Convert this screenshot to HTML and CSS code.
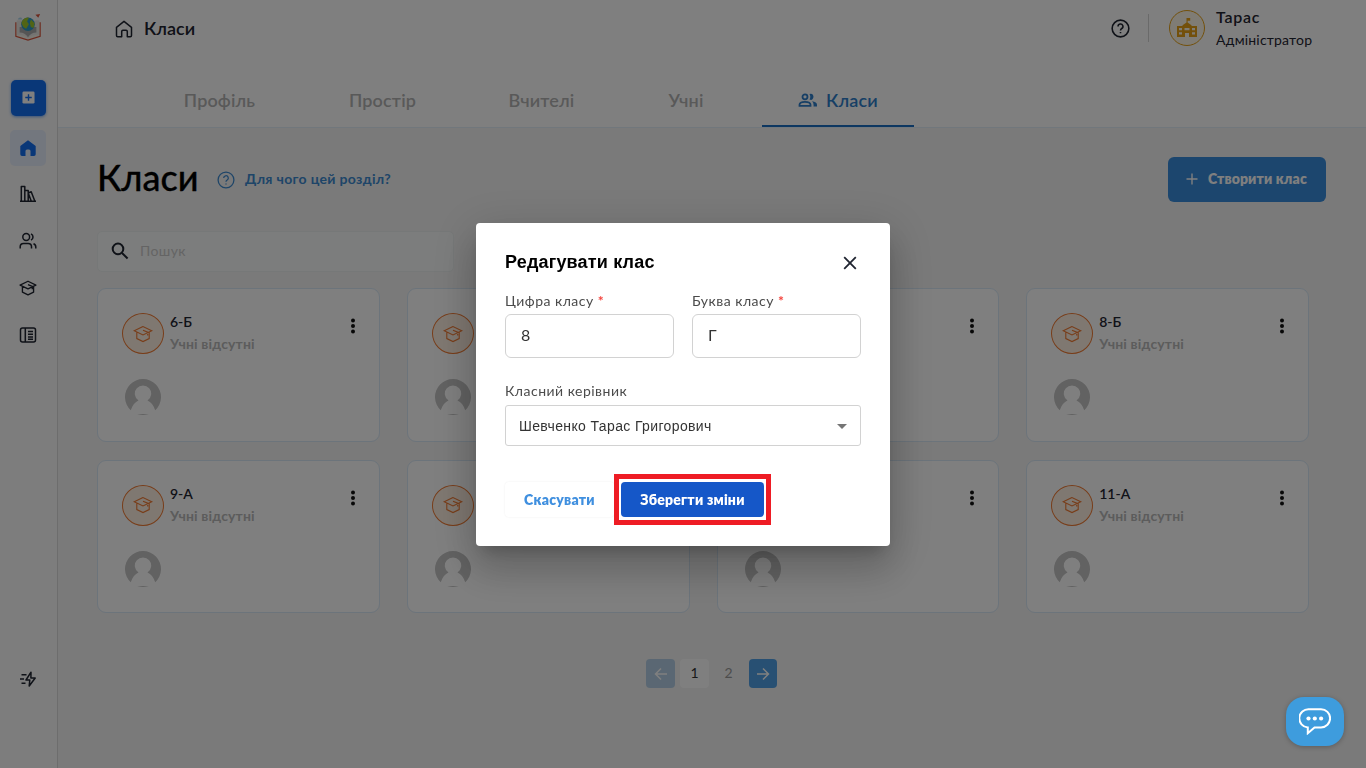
FILE: index.html
```html
<!DOCTYPE html>
<html lang="uk">

<head>
    <meta charset="UTF-8">
    <meta name="viewport" content="width=device-width, initial-scale=1.0">
    <title>Класи</title>
    <link rel="stylesheet" href="styles.css">
</head>

<body>
    <svg class="sprite">
        <symbol id="cap" viewBox="0 0 20 20">
            <path d="M10 2.5 1.2 6.7 10 11l8.8-4.3zM3.8 8v6.6L10 17.6l6.2-3V8M10 6.2l4.7 2v3.3" />
        </symbol>
        <symbol id="dots" viewBox="0 0 6 16">
            <circle cx="3" cy="2.4" r="2" />
            <circle cx="3" cy="8" r="2" />
            <circle cx="3" cy="13.6" r="2" />
        </symbol>
        <symbol id="user" viewBox="0 0 36 36">
            <path d="M5.8 31.3A18 18 0 1 1 30.2 31.3C28.5 26.5 26 23 22.5 21.6A8.2 8.2 0 1 0 13.5 21.6C10 23 7.5 26.5 5.8 31.3z" />
            <path d="M12 35.3q6-.8 12 0-6 1.2-12 0z" />
        </symbol>
        <symbol id="help" viewBox="0 0 18 18">
            <circle cx="9" cy="9" r="7.9" />
            <path d="M6.700 7.100a2.300 2.300 0 1 1 3.500 1.900c-.8.500-1.200.9-1.200 1.800M9 12.400v1.200" />
        </symbol>
    </svg>

    <div class="app">
        <aside class="sidebar">
            <svg class="logo" viewBox="0 0 30 28">
                <path d="M2 9v15l13 4 13-4V9" fill="#f4f0e6" stroke="#d9543a" stroke-width="1.3" />
                <path d="M3 7q7-1 12 3 5-4 12-3v15q-8 0-12 4-4-4-12-4z" fill="#e9e7e2" />
                <path d="M6 20q6 0 9 5 3-5 9-5v-6H6z" fill="#aaa" />
                <path d="M4 6q1-3 4-2l1 2z" fill="#a9d4ea" />
                <circle cx="15" cy="11" r="7.3" fill="#2f9bc9" />
                <path d="M9 7q3-4 7-3l-2 4 2 3-3 5q-4-2-5-6zM18 6l4 4-1 5-3-1-1-4z" fill="#a3c92b" />
                <path d="m23 1 5-1-2 4z" fill="#d9543a" />
            </svg>
            <nav class="side-nav">
                <a class="side-link add">
                    <svg width="13" height="13" viewBox="0 0 14 14">
                        <rect x=".5" y=".5" width="13" height="13" rx="1.5" fill="#fff" />
                        <path d="M7 3.500v7M3.500 7h7" stroke="#136ef0" stroke-width="1.5" />
                    </svg>
                </a>
                <a class="side-link active">
                    <svg width="18" height="18" viewBox="0 0 18 18">
                        <path d="M9 1.200 1.300 7v8.200Q1.300 17 3 17h3.500v-5q0-1.500 1.500-1.500h2q1.500 0 1.500 1.500v5H15q1.700 0 1.700-1.800V7z" fill="#136ef0" />
                    </svg>
                </a>
                <a class="side-link">
                    <svg class="line" width="18" height="18" viewBox="0 0 18 18">
                        <path d="M1 16.300h16M2.300 16V1.500h3.500V16M5.800 5.500h3.400V16M9.200 8l3-1.200L15.800 16M9.200 8l3 8" />
                    </svg>
                </a>
                <a class="side-link">
                    <svg class="line" width="18" height="18" viewBox="0 0 18 18">
                        <circle cx="7.2" cy="5" r="3.4" />
                        <path d="M1.200 16.500v-1.700Q1.200 11.500 4.500 11.500h4.700q3.300 0 3.300 3.300v1.700M12 1.800q2 1 2 3.200t-2 3.200M14.500 11.700q2.300.8 2.300 3.200v1.600" />
                    </svg>
                </a>
                <a class="side-link">
                    <svg class="line" width="18" height="18"><use href="#cap" /></svg>
                </a>
                <a class="side-link">
                    <svg class="line" width="18" height="18" viewBox="0 0 18 18">
                        <rect x="1.5" y="2" width="15" height="14" rx="2" />
                        <path d="M6.300 2v14M9 5.500h5M9 8.200h5M9 10.900h5M9 13.300h5" />
                    </svg>
                </a>
            </nav>
            <svg class="line bolt" width="18" height="18" viewBox="0 0 18 18">
                <path d="M2.500 4.700h5M1 9h4M2.500 13.300h4M12 2.200 7 10h3.800l-.6 6L16.200 8h-4.300z" />
            </svg>
        </aside>

        <div class="main">
            <header class="header">
                <div class="topbar">
                    <div class="crumb">
                        <svg class="line" width="18" height="18" viewBox="0 0 18 18">
                            <path d="M1.500 7.300 9 1.300l7.500 6v8.200q0 1.200-1.200 1.200h-3v-5.200q0-1.200-1.200-1.200H7.900q-1.200 0-1.200 1.200v5.200h-4q-1.200 0-1.200-1.200z" />
                        </svg>
                        <span class="crumb-text">Класи</span>
                    </div>
                    <div class="account">
                        <svg class="line help-top" width="19" height="19"><use href="#help" /></svg>
                        <div class="school">
                            <svg width="20" height="20" viewBox="0 0 20 20">
                                <path d="M9.500 0h3.700v2.800h-2.600V4.500l3.900 2.800V8H20V19h-8v-4H8v4H0V8h5.500V7.300L9.500 4.500z" fill="#e6a116" />
                                <path d="M2 10h3v2.200H2zm0 4.300h3v2.200H2zM7.500 10h5v2.200h-5zM15 10h3v2.200h-3zm0 4.300h3v2.200h-3z" fill="#fff8ea" />
                            </svg>
                        </div>
                        <div class="person">
                            <p class="person-name">Тарас</p>
                            <p class="person-role">Адміністратор</p>
                        </div>
                    </div>
                </div>
                <nav class="tabs">
                    <a class="tab">Профіль</a>
                    <a class="tab">Простір</a>
                    <a class="tab">Вчителі</a>
                    <a class="tab">Учні</a>
                    <a class="tab current">
                        <svg width="20" height="14" viewBox="0 0 20 14">
                            <circle cx="7" cy="3.8" r="2.5" />
                            <path d="M1.500 12.800v-1q0-3 5.500-3t5.500 3v1z" />
                            <path class="fill" d="M11.500 1q3.500-1.200 4 2.800-.5 4-4 2.800 1.600-2.800 0-5.600zM14 8.300q5 .7 5 3.500v1.800h-3.500q.5-3.800-1.500-5.300z" />
                        </svg>
                        Класи
                    </a>
                </nav>
            </header>

            <main class="content">
                <div class="heading">
                    <h1 class="title">Класи</h1>
                    <a class="hint">
                        <svg width="18" height="18"><use href="#help" /></svg>
                        <span>Для чого цей розділ?</span>
                    </a>
                    <button class="create">
                        <svg width="12" height="12" viewBox="0 0 12 12"><path d="M6 .5v11M.5 6h11" /></svg>
                        <span>Створити клас</span>
                    </button>
                </div>

                <div class="search">
                    <svg width="18" height="18" viewBox="0 0 18 18">
                        <circle cx="7" cy="6.9" r="5.3" />
                        <path d="m11 11 5.600 5.500" />
                    </svg>
                    <span>Пошук</span>
                </div>

                <div class="cards">
                    <div class="card">
                        <div class="card-top">
                            <div class="badge"><svg width="20" height="20"><use href="#cap" /></svg></div>
                            <div class="card-text">
                                <p class="card-name">6-Б</p>
                                <p class="card-note">Учні відсутні</p>
                            </div>
                            <svg class="more"><use href="#dots" /></svg>
                        </div>
                        <svg class="avatar"><use href="#user" /></svg>
                    </div>
                    <div class="card">
                        <div class="card-top">
                            <div class="badge"><svg width="20" height="20"><use href="#cap" /></svg></div>
                        </div>
                        <svg class="avatar"><use href="#user" /></svg>
                    </div>
                    <div class="card">
                        <div class="card-top">
                            <div class="badge"><svg width="20" height="20"><use href="#cap" /></svg></div>
                            <svg class="more"><use href="#dots" /></svg>
                        </div>
                        <svg class="avatar"><use href="#user" /></svg>
                    </div>
                    <div class="card">
                        <div class="card-top">
                            <div class="badge"><svg width="20" height="20"><use href="#cap" /></svg></div>
                            <div class="card-text">
                                <p class="card-name">8-Б</p>
                                <p class="card-note">Учні відсутні</p>
                            </div>
                            <svg class="more"><use href="#dots" /></svg>
                        </div>
                        <svg class="avatar"><use href="#user" /></svg>
                    </div>
                    <div class="card">
                        <div class="card-top">
                            <div class="badge"><svg width="20" height="20"><use href="#cap" /></svg></div>
                            <div class="card-text">
                                <p class="card-name">9-А</p>
                                <p class="card-note">Учні відсутні</p>
                            </div>
                            <svg class="more"><use href="#dots" /></svg>
                        </div>
                        <svg class="avatar"><use href="#user" /></svg>
                    </div>
                    <div class="card">
                        <div class="card-top">
                            <div class="badge"><svg width="20" height="20"><use href="#cap" /></svg></div>
                        </div>
                        <svg class="avatar"><use href="#user" /></svg>
                    </div>
                    <div class="card">
                        <div class="card-top">
                            <div class="badge"><svg width="20" height="20"><use href="#cap" /></svg></div>
                            <svg class="more"><use href="#dots" /></svg>
                        </div>
                        <svg class="avatar"><use href="#user" /></svg>
                    </div>
                    <div class="card">
                        <div class="card-top">
                            <div class="badge"><svg width="20" height="20"><use href="#cap" /></svg></div>
                            <div class="card-text">
                                <p class="card-name">11-А</p>
                                <p class="card-note">Учні відсутні</p>
                            </div>
                            <svg class="more"><use href="#dots" /></svg>
                        </div>
                        <svg class="avatar"><use href="#user" /></svg>
                    </div>
                </div>

                <div class="pager">
                    <a class="arrow disabled"><svg width="14" height="14" viewBox="0 0 14 14"><path d="M13 7H2M7 1.500 1.500 7 7 12.500" /></svg></a>
                    <a class="page on">1</a>
                    <a class="page">2</a>
                    <a class="arrow"><svg width="14" height="14" viewBox="0 0 14 14"><path d="M1 7h11M7 1.500 12.500 7 7 12.500" /></svg></a>
                </div>
            </main>
        </div>
    </div>

    <div class="overlay">
        <div class="modal">
            <div class="modal-head">
                <h2 class="modal-title">Редагувати клас</h2>
                <svg width="14" height="14" viewBox="0 0 14 14"><path d="m1.200 1.200 11.600 11.600M12.800 1.200 1.200 12.800" /></svg>
            </div>
            <div class="fields">
                <div class="field">
                    <label class="label">Цифра класу <b>*</b></label>
                    <div class="input">8</div>
                </div>
                <div class="field">
                    <label class="label">Буква класу <b>*</b></label>
                    <div class="input">Г</div>
                </div>
            </div>
            <label class="label">Класний керівник</label>
            <div class="select">
                <span>Шевченко Тарас Григорович</span>
                <i class="caret"></i>
            </div>
            <div class="buttons">
                <button class="btn cancel">Скасувати</button>
                <button class="btn save">Зберегти зміни</button>
            </div>
        </div>
    </div>

    <div class="chat">
        <svg width="32" height="27" viewBox="0 0 32 27">
            <path d="M10 1.200h12a9 9 0 0 1 0 18.200H15.500L8.800 25.200V19.400A9 9 0 0 1 10 1.200z" />
            <circle cx="9.5" cy="10.5" r="2.1" />
            <circle cx="15.8" cy="10.5" r="2.1" />
            <circle cx="22.1" cy="10.5" r="2.1" />
        </svg>
    </div>
</body>

</html>
```
FILE: styles.css
```css
*,
*::before,
*::after {
    margin: 0;
    padding: 0;
    box-sizing: border-box;
}

body {
    height: 768px;
    overflow: hidden;
    font-family: Lato, "Open Sans", sans-serif;
    font-size: 14px;
    line-height: 20px;
    color: #1f2430;
    background-color: #f4f4f4;
}

svg {
    display: block;
    flex: none;
}

button {
    border: 0;
    font: inherit;
}

.sprite {
    display: none;
}

.line {
    fill: none;
    stroke: #1f2430;
    stroke-width: 1.5;
    stroke-linejoin: round;
}

.app {
    display: flex;
    height: 768px;
}

/* sidebar */
.sidebar {
    display: flex;
    flex-direction: column;
    align-items: center;
    width: 58px;
    padding: 13px 1px 80px 0;
    border-right: 1px solid #dadada;
    background-color: #fafafa;
}

.logo {
    width: 28px;
    height: 28px;
}

.side-nav {
    display: flex;
    flex-direction: column;
    align-items: center;
    gap: 11px;
    margin-top: 39px;
}

.side-link {
    display: flex;
    align-items: center;
    justify-content: center;
    width: 36px;
    height: 36px;
    border-radius: 5px;
}

.side-link.add {
    width: 35px;
    margin: 0 0 3px 1px;
    padding-bottom: 1px;
    background-color: #136ef0;
    box-shadow: 0 1px 3px rgba(19, 110, 240, 0.6);
}

.side-link.active {
    margin-bottom: -1px;
    background-color: #e6eefc;
}

.bolt {
    margin-top: auto;
}

/* header */
.main {
    flex: 1;
}

.header {
    display: flex;
    flex-direction: column;
    justify-content: space-between;
    height: 128px;
    border-bottom: 1px solid #e3eef8;
    background-color: #fff;
}

.topbar {
    display: flex;
    justify-content: space-between;
    height: 57px;
    padding: 0 54px 0 57px;
}

.crumb {
    display: flex;
    align-items: center;
    gap: 11px;
    font-size: 18px;
    font-weight: 600;
}

.crumb-text {
    padding-bottom: 2px;
}

.account {
    display: flex;
    align-items: center;
    padding-bottom: 1px;
}

.help-top {
    margin-right: 19px;
}

.school {
    display: flex;
    align-items: center;
    justify-content: center;
    position: relative;
    width: 36px;
    height: 36px;
    margin-left: 20px;
    border: 1px solid #e6a116;
    border-radius: 50%;
    background-color: #fff8ea;
}

.school::before {
    content: "";
    position: absolute;
    left: -22px;
    width: 1px;
    height: 28px;
    background-color: #d5d5d5;
}

.person {
    width: 96px;
    margin-left: 11px;
}

.person-name {
    padding-bottom: 3px;
    font-size: 16px;
    font-weight: 600;
    line-height: 20px;
    letter-spacing: 0.7px;
}

.person-role {
    letter-spacing: 0.2px;
}

.tabs {
    display: grid;
    grid-template-columns: 145px 137px 137px 108px 152px;
    gap: 22px;
    margin-left: 89px;
}

.tab {
    display: flex;
    align-items: center;
    justify-content: center;
    gap: 8px;
    height: 52px;
    border-bottom: 2px solid transparent;
    font-size: 18px;
    font-weight: 600;
    letter-spacing: 0.15px;
    color: #b3b3b3;
}

.tab.current {
    border-color: #1b6fc2;
    color: #2f7fcb;
}

.tab svg {
    fill: none;
    stroke: #2f7fcb;
    stroke-width: 1.8;
}

.tab .fill {
    fill: #2f7fcb;
    stroke: none;
}

/* content */
.content {
    padding: 29px 40px 0 39px;
}

.heading {
    display: flex;
    align-items: center;
    height: 45px;
}

.title {
    width: 120px;
    padding-bottom: 5px;
    font-size: 36px;
    font-weight: 500;
    line-height: 40px;
    color: #000;
    -webkit-text-stroke: 0.3px #000;
}

.hint {
    display: flex;
    align-items: center;
    gap: 10px;
    font-weight: 700;
    letter-spacing: 0.33px;
    color: #3c8ad1;
}

.hint span,
.create span {
    padding-bottom: 2px;
}

.hint svg {
    fill: none;
    stroke: #3c8ad1;
    stroke-width: 1.3;
}

.create {
    display: flex;
    align-items: center;
    gap: 10px;
    width: 158px;
    height: 45px;
    margin-left: auto;
    padding-left: 18px;
    border-radius: 6px;
    font-weight: 800;
    letter-spacing: 0.15px;
    color: #fff;
    background-color: #388ddd;
}

.create svg {
    margin-bottom: 1px;
    stroke: #fff;
    stroke-width: 1.4;
}

.search {
    display: flex;
    align-items: center;
    gap: 11px;
    width: 357px;
    height: 41px;
    margin-top: 29px;
    padding: 0 0 1px 13px;
    border: 1px solid #edf1f1;
    border-radius: 5px;
    letter-spacing: 0.4px;
    color: #c9c9c9;
    background-color: #f9fbfa;
}

.search svg {
    fill: none;
    stroke: #1f2430;
    stroke-width: 2;
}

.cards {
    display: grid;
    grid-template-columns: repeat(4, 1fr);
    gap: 18px 27px;
    width: 1212px;
    margin-top: 16px;
}

.card {
    height: 153.5px;
    padding: 23px 24px;
    border: 1px solid #d8e8f6;
    border-radius: 9px;
    background-color: #fff;
}

.card-top {
    display: flex;
}

.badge {
    display: flex;
    align-items: center;
    justify-content: center;
    width: 42px;
    height: 41px;
    margin-top: 1px;
    border: 1px solid #f07a32;
    border-radius: 50%;
    background-color: #fff0e2;
}

.badge svg {
    fill: none;
    stroke: #f07a32;
    stroke-width: 1.1;
}

.card-text {
    margin-left: 6px;
}

.card-name {
    line-height: 19px;
    font-weight: 600;
}

.card-note {
    margin-top: 3px;
    font-weight: 700;
    letter-spacing: 0.15px;
    color: #b9b9b9;
}

.more {
    width: 6px;
    height: 16px;
    margin: 6px -1px 0 auto;
    fill: #111;
}

.avatar {
    width: 36px;
    height: 36px;
    margin: 25px 0 0 3px;
    fill: #c4c4c4;
}

.pager {
    display: flex;
    gap: 5px;
    margin: 46px 0 0 549px;
}

.arrow,
.page {
    display: flex;
    align-items: center;
    justify-content: center;
    width: 29px;
    height: 29px;
    border-radius: 4px;
    color: #9b9b9b;
}

.page {
    padding-bottom: 2px;
}

.page.on {
    color: #333;
    background-color: #fff;
}

.arrow {
    width: 28px;
    background-color: #50a0e6;
}

.arrow.disabled {
    width: 29px;
    background-color: #b5cfe6;
}

.page + .arrow {
    margin-left: 1px;
}

.arrow svg {
    fill: none;
    stroke: #fff;
    stroke-width: 1.5;
}

/* dialog */
.overlay {
    display: flex;
    align-items: center;
    justify-content: center;
    position: fixed;
    top: 0;
    right: 0;
    bottom: 0;
    left: 0;
    background-color: rgba(0, 0, 0, 0.5);
}

.modal {
    width: 414px;
    height: 323px;
    margin-top: 1px;
    padding: 29px;
    border-radius: 4px;
    background-color: #fff;
    box-shadow: 0 11px 15px -7px rgba(0, 0, 0, 0.2), 0 24px 38px 3px rgba(0, 0, 0, 0.14), 0 9px 46px 8px rgba(0, 0, 0, 0.12);
}

.modal-head {
    display: flex;
    align-items: center;
    justify-content: space-between;
    height: 21px;
    padding-right: 4px;
}

.modal-head svg {
    stroke: #1f2430;
    stroke-width: 1.8;
}

.modal-title {
    padding-bottom: 2px;
    font-family: "Liberation Sans", sans-serif;
    font-size: 18px;
    letter-spacing: 0.18px;
    color: #000;
}

.fields {
    display: flex;
    gap: 18px;
    margin: 18px 0 23px;
}

.field {
    flex: 1;
}

.label {
    display: block;
    height: 23px;
    letter-spacing: 0.48px;
    color: #4b4b4b;
}

.label b {
    color: #f4433c;
}

.input {
    height: 44px;
    padding: 0 15px;
    border: 1px solid #d2d2d2;
    border-radius: 6px;
    font-size: 16px;
    line-height: 40px;
    color: #333;
}

.select {
    display: flex;
    align-items: center;
    justify-content: space-between;
    height: 41px;
    margin-top: 1px;
    padding: 0 13px;
    border: 1px solid #d2d2d2;
    border-radius: 3px;
    font-family: "Liberation Sans", sans-serif;
    letter-spacing: 0.37px;
    color: #333;
}

.caret {
    margin-top: 1px;
    border: 5px solid transparent;
    border-top-color: #757575;
    border-bottom: 0;
}

.buttons {
    display: flex;
    gap: 7px;
    position: relative;
    margin-top: 36px;
}

/* red frame round the save button */
.buttons::after {
    content: "";
    position: absolute;
    left: 109px;
    top: -8px;
    width: 157px;
    height: 51px;
    border: 5px solid #ee1c24;
}

.btn {
    height: 35px;
    border-radius: 4px;
    font-weight: 800;
    letter-spacing: 0.25px;
}

.cancel {
    width: 109px;
    color: #3f8fdf;
    background-color: #fff;
    box-shadow: 0 0 2px rgba(0, 0, 0, 0.08);
}

.save {
    width: 143px;
    color: #fff;
    background-color: #1557c8;
}

.chat {
    display: flex;
    align-items: center;
    justify-content: center;
    position: fixed;
    right: 22px;
    bottom: 22px;
    width: 58px;
    height: 49px;
    border-radius: 18px;
    background-color: #3e9cdd;
    box-shadow: 0 1px 5px rgba(0, 0, 0, 0.25);
}

.chat svg {
    fill: none;
    stroke: #fff;
    stroke-width: 2;
}

.chat circle {
    fill: #fff;
    stroke: none;
}
```
